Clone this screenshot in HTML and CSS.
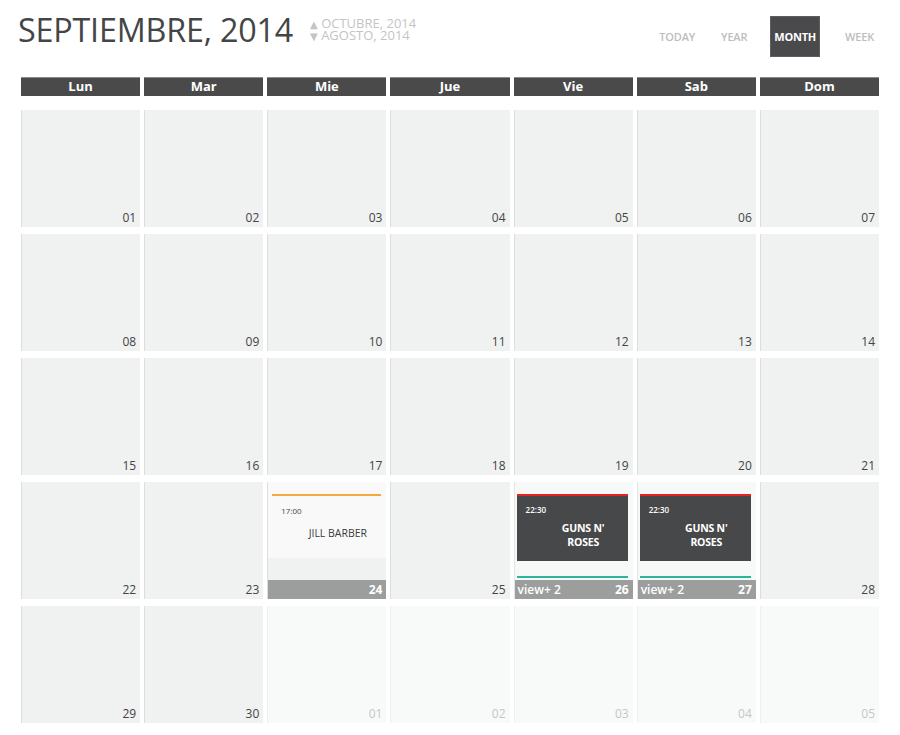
FILE: index.html
```html
<!DOCTYPE html>
<html lang="es">
<head>
<meta charset="utf-8">
<title>Calendario</title>
<link rel="stylesheet" href="styles.css">
</head>
<body>
<div class="page">
  <header class="top">
    <h1 class="title">SEPTIEMBRE, 2014</h1>
    <div class="nav">
      <div class="nav-item"><span class="tri">▲</span> OCTUBRE, 2014</div>
      <div class="nav-item"><span class="tri">▼</span> AGOSTO, 2014</div>
    </div>
    <nav class="views">
      <span class="view">TODAY</span>
      <span class="view">YEAR</span>
      <span class="view active">MONTH</span>
      <span class="view">WEEK</span>
    </nav>
  </header>

  <div class="weekdays">
    <div class="wd">Lun</div><div class="wd">Mar</div><div class="wd">Mie</div><div class="wd">Jue</div><div class="wd">Vie</div><div class="wd">Sab</div><div class="wd">Dom</div>
  </div>

  <div class="grid">
    <div class="cell"><span class="num">01</span></div>
    <div class="cell"><span class="num">02</span></div>
    <div class="cell"><span class="num">03</span></div>
    <div class="cell"><span class="num">04</span></div>
    <div class="cell"><span class="num">05</span></div>
    <div class="cell"><span class="num">06</span></div>
    <div class="cell"><span class="num">07</span></div>

    <div class="cell"><span class="num">08</span></div>
    <div class="cell"><span class="num">09</span></div>
    <div class="cell"><span class="num">10</span></div>
    <div class="cell"><span class="num">11</span></div>
    <div class="cell"><span class="num">12</span></div>
    <div class="cell"><span class="num">13</span></div>
    <div class="cell"><span class="num">14</span></div>

    <div class="cell"><span class="num">15</span></div>
    <div class="cell"><span class="num">16</span></div>
    <div class="cell"><span class="num">17</span></div>
    <div class="cell"><span class="num">18</span></div>
    <div class="cell"><span class="num">19</span></div>
    <div class="cell"><span class="num">20</span></div>
    <div class="cell"><span class="num">21</span></div>

    <div class="cell"><span class="num">22</span></div>
    <div class="cell"><span class="num">23</span></div>
    <div class="cell cell-event">
      <div class="light-event">
        <div class="line-orange"></div>
        <div class="ev-time">17:00</div>
        <div class="ev-title">JILL BARBER</div>
      </div>
      <div class="cell-foot"><span></span><span class="foot-num">24</span></div>
    </div>
    <div class="cell"><span class="num">25</span></div>
    <div class="cell cell-event cell-dark">
      <div class="dark-event">
        <div class="ev-time">22:30</div>
        <div class="ev-title dark-title">GUNS N'<br>ROSES</div>
      </div>
      <div class="line-teal"></div>
      <div class="cell-foot"><span class="more">view+ 2</span><span class="foot-num">26</span></div>
    </div>
    <div class="cell cell-event cell-dark">
      <div class="dark-event">
        <div class="ev-time">22:30</div>
        <div class="ev-title dark-title">GUNS N'<br>ROSES</div>
      </div>
      <div class="line-teal"></div>
      <div class="cell-foot"><span class="more">view+ 2</span><span class="foot-num">27</span></div>
    </div>
    <div class="cell"><span class="num">28</span></div>

    <div class="cell"><span class="num">29</span></div>
    <div class="cell"><span class="num">30</span></div>
    <div class="cell other"><span class="num">01</span></div>
    <div class="cell other"><span class="num">02</span></div>
    <div class="cell other"><span class="num">03</span></div>
    <div class="cell other"><span class="num">04</span></div>
    <div class="cell other"><span class="num">05</span></div>
  </div>
</div>
</body>
</html>
```

FILE: styles.css
```css
* { box-sizing: border-box; }

html, body {
  margin: 0;
  padding: 0;
  background: #ffffff;
}

body {
  font-family: "Open Sans", "Liberation Sans", sans-serif;
  color: #444;
}

.page {
  width: 900px;
  height: 735px;
}

.top {
  display: flex;
  align-items: flex-start;
  height: 77px;
  padding: 6px 23px 0 18px;
}

.title {
  margin: 0;
  font-size: 32.3px;
  font-weight: 400;
  line-height: 46px;
  color: #444546;
  letter-spacing: -0.2px;
}

.nav {
  margin-left: 17px;
  margin-top: 11px;
  font-size: 13px;
  line-height: 12px;
  color: #c4c4c4;
}

.nav-item {
  height: 12px;
}

.tri {
  font-family: "DejaVu Sans", sans-serif;
  font-size: 10px;
}

.views {
  margin-left: auto;
  margin-top: 10px;
  display: flex;
  gap: 20px;
}

.view {
  display: block;
  height: 41px;
  line-height: 41px;
  padding: 0 3px;
  font-size: 11px;
  font-weight: 600;
  color: #bdbdbd;
  letter-spacing: -0.2px;
}

.view.active {
  background: #4a4a4c;
  color: #ffffff;
  font-weight: 700;
  border: 1px solid #5e5e60;
  line-height: 39px;
  padding: 0 3px;
  margin-right: 2px;
}

.weekdays {
  display: grid;
  grid-template-columns: repeat(7, 1fr);
  column-gap: 4px;
  width: 858px;
  margin-left: 21px;
}

.wd {
  height: 19px;
  background: #4a4a4b;
  border-top: 1px solid #8a8a8a;
  color: #ffffff;
  font-weight: 700;
  font-size: 13px;
  line-height: 17px;
  text-align: center;
}

.grid {
  display: grid;
  grid-template-columns: repeat(7, 1fr);
  grid-auto-rows: 117px;
  column-gap: 4px;
  row-gap: 7px;
  width: 858px;
  margin: 14px 0 0 21px;
}

.cell {
  background: #f0f1f1;
  border-left: 1px solid #dcdddd;
  display: flex;
  flex-direction: column;
  justify-content: flex-end;
  align-items: flex-end;
  padding: 0 4px 0 0;
}

.num {
  font-size: 12px;
  line-height: 18px;
  color: #444;
}

.cell.other {
  background: #f8f9f9;
  border-left-color: #eeefef;
}

.cell.other .num {
  color: #c6c6c6;
}

/* event cells */
.cell-event {
  padding: 0;
  align-items: stretch;
  justify-content: flex-start;
}

.light-event {
  height: 76px;
  background: #f9f9f9;
  padding: 12px 5px 0 4px;
}

.line-orange {
  height: 2px;
  background: #f5a93c;
}

.ev-time {
  font-size: 8px;
  line-height: 10px;
  margin: 10px 0 0 9px;
  color: #444;
}

.ev-title {
  font-size: 10.5px;
  line-height: 14px;
  text-align: center;
  padding-left: 22px;
  margin-top: 10px;
  color: #3a3a3a;
}

.cell-foot {
  margin-top: auto;
  height: 19px;
  background: #9c9e9e;
  display: flex;
  justify-content: space-between;
  align-items: center;
  padding: 0 4px 0 3px;
  color: #ffffff;
  font-size: 12px;
}

.foot-num {
  font-weight: 700;
}

.more {
  font-weight: 600;
}

.cell-dark {
  background: #f7f8f8;
  border-left-color: #e4e5e5;
}

.dark-event {
  height: 67px;
  margin: 12px 5px 0 2px;
  background: #474849;
  border-top: 2px solid #e42323;
  color: #ffffff;
}

.dark-event .ev-time {
  color: #ffffff;
  font-weight: 600;
  margin-top: 9px;
}

.dark-title {
  color: #ffffff;
  font-weight: 700;
  margin-top: 6px;
  letter-spacing: -0.2px;
}

.line-teal {
  height: 2px;
  margin: 15px 5px 0 2px;
  background: #2bb69c;
}
```
